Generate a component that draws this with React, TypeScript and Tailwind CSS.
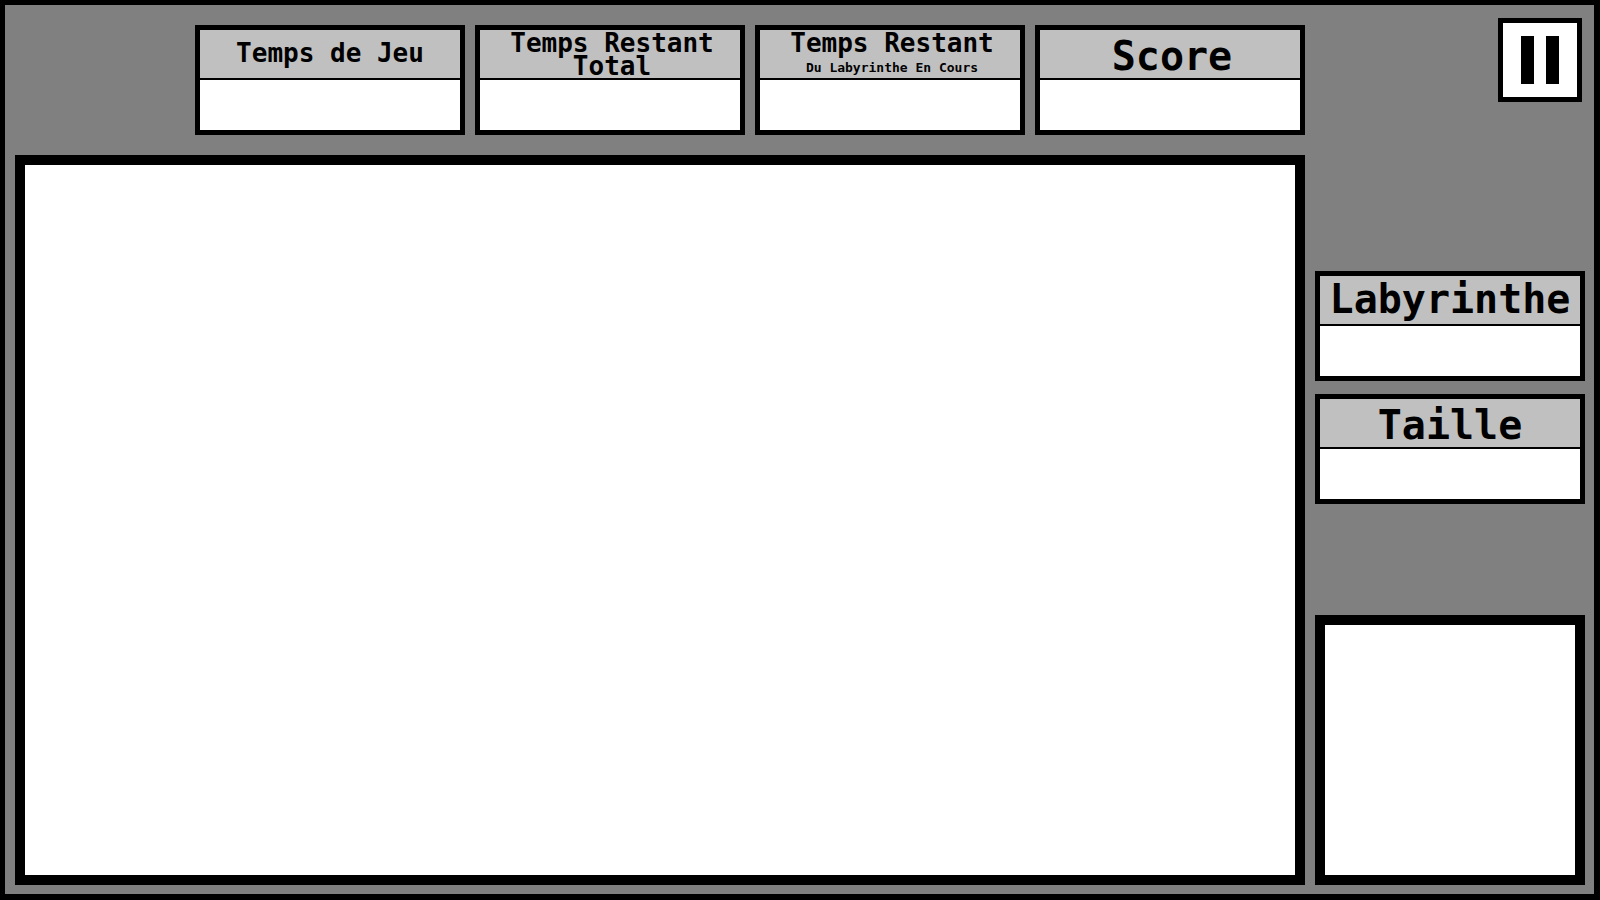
import { useId, type ReactNode } from "react";

type StatProps = {
  children: ReactNode;
  headerClass?: string;
};

function Stat({ children, headerClass = "justify-center" }: StatProps) {
  const id = useId();
  return (
    <section aria-labelledby={id} className="w-[270px] border-5 border-black bg-white">
      <h2
        id={id}
        className={`flex h-[50px] flex-col items-center border-b-2 border-black bg-[#c0c0c0] text-center whitespace-nowrap ${headerClass}`}
      >
        {children}
      </h2>
      <output aria-labelledby={id} className="block h-[50px]" />
    </section>
  );
}

function PauseButton() {
  return (
    <button
      type="button"
      aria-label="Pause"
      className="mr-[3px] flex size-[84px] items-center justify-center gap-3 self-end border-5 border-black bg-white"
    >
      <span className="h-12 w-[13px] bg-black" />
      <span className="h-12 w-[13px] bg-black" />
    </button>
  );
}

export default function App() {
  return (
    <div className="flex min-h-screen gap-[10px] border-t-5 border-r-6 border-b-6 border-l-5 border-black bg-[#808080] pr-[9px] pb-[9px] pl-[10px] font-['DejaVu_Sans_Mono',monospace] font-bold text-black">
      <main className="flex min-w-0 flex-1 flex-col gap-5 pt-5">
        <header className="flex justify-end gap-[10px]">
          <Stat headerClass="justify-center pb-[2px]">
            <span className="text-[26px] leading-[23px]">Temps de Jeu</span>
          </Stat>
          <Stat headerClass="justify-start pt-[2px] pl-1">
            <span className="text-[26px] leading-[23px]">Temps Restant</span>
            <span className="text-[26px] leading-[23px]">Total</span>
          </Stat>
          <Stat headerClass="justify-start pt-[2px] pl-1">
            <span className="text-[26px] leading-[23px]">Temps Restant</span>
            <span className="text-[13px] leading-[26px]">Du Labyrinthe En Cours</span>
          </Stat>
          <Stat headerClass="justify-center pt-1 pl-1">
            <span className="text-[40px] leading-10">Score</span>
          </Stat>
        </header>
        <div role="img" aria-label="Labyrinthe" className="flex-1 border-10 border-black bg-white" />
      </main>

      <aside className="flex w-[270px] flex-col pt-[13px]">
        <PauseButton />
        <div className="mt-[169px] mb-5 flex flex-col gap-[13px]">
          <Stat headerClass="justify-center pb-[2px]">
            <span className="text-[40px] leading-10">Labyrinthe</span>
          </Stat>
          <Stat headerClass="justify-center pt-1">
            <span className="text-[40px] leading-10">Taille</span>
          </Stat>
        </div>
        <div role="img" aria-label="Carte" className="mt-auto aspect-square border-10 border-black bg-white" />
      </aside>
    </div>
  );
}
